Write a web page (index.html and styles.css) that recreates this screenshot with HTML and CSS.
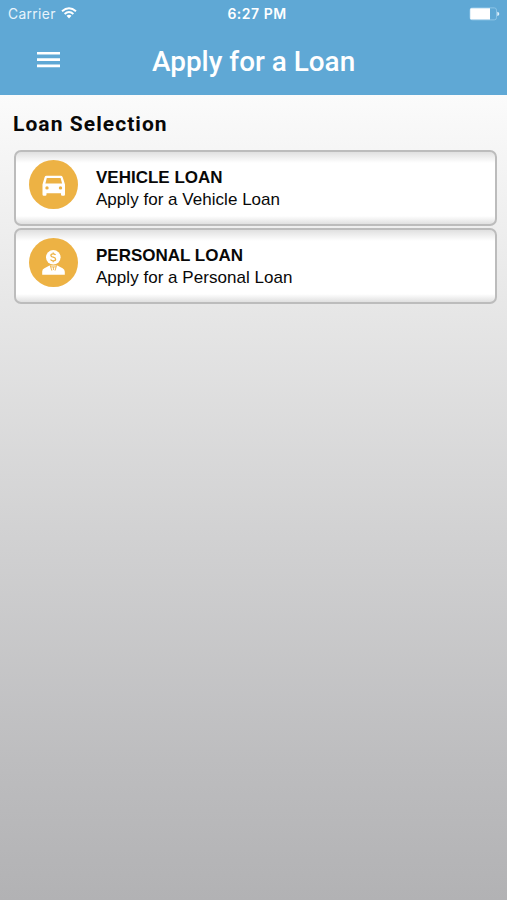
FILE: index.html
```html
<!DOCTYPE html>
<html lang="en">
<head>
<meta charset="utf-8">
<title>Apply for a Loan</title>
<link rel="stylesheet" href="styles.css">
</head>
<body>
<header class="header">
  <div class="status">
    <div class="carrier"><span>Carrier</span>
      <svg class="wifi" width="16" height="12" viewBox="0 0 16 12" fill="none" stroke="#fff" stroke-width="1.9"><path d="M1 4.2Q8-1.8 15 4.2M3.6 7Q8 3.2 12.4 7"/><path d="M5.5 8.8Q8 6.8 10.5 8.8L8 11.4Z" fill="#fff" stroke="none"/></svg>
    </div>
    <time class="time">6:27 PM</time>
    <svg class="battery" width="31" height="14" viewBox="0 0 31 14"><rect x="1" y=".9" width="26.5" height="12" rx="2.2" fill="none" stroke="#8cc4e6"/><path d="M2.5 1.3H21V12.5H2.5Q1.2 12.5 1.2 11.3V2.5Q1.2 1.3 2.5 1.3Z" fill="#fff"/><path d="M28.3 4.8Q30.3 5.4 30.3 6.9T28.3 9Z" fill="#e3f2fb"/></svg>
  </div>
  <div class="nav">
    <svg class="menu" width="23" height="16" viewBox="0 0 23 16" fill="#fff"><path d="M0 0H23V2.6H0ZM0 6.3H23V8.9H0ZM0 12.6H23V15.2H0Z"/></svg>
    <h1 class="title">Apply for a Loan</h1>
  </div>
</header>
<main class="content">
  <h2 class="heading">Loan Selection</h2>
  <section class="cards">
    <article class="card">
      <svg class="icon" width="49" height="49" viewBox="0 0 49 49"><circle cx="24.5" cy="24.5" r="24.5" fill="#edb244"/><path fill="#fff" fill-rule="evenodd" d="M17.5 15.8H31.7Q33.2 15.8 33.7 17.2L36 24.6V34.5Q36 35.7 34.8 35.7H33.2Q32 35.7 32 34.5V33.2H17.5V34.5Q17.5 35.7 16.3 35.7H14.7Q13.5 35.7 13.5 34.5V24.6L15.6 17.2Q16 15.8 17.5 15.8ZM17.8 18L16.4 23.6H33.1L31.6 18ZM18 26.2A1.7 1.7 0 1 0 18 29.6A1.7 1.7 0 1 0 18 26.2ZM31.5 26.2A1.7 1.7 0 1 0 31.5 29.6A1.7 1.7 0 1 0 31.5 26.2Z"/></svg>
      <div class="copy"><h3 class="name">VEHICLE LOAN</h3><p class="desc">Apply for a Vehicle Loan</p></div>
    </article>
    <article class="card">
      <svg class="icon" width="49" height="49" viewBox="0 0 49 49"><circle cx="24.5" cy="24.5" r="24.5" fill="#edb244"/><circle cx="24.3" cy="19.3" r="7.3" fill="#fff"/><path d="M26.5 17Q25.8 15.9 24.2 15.9Q21.9 15.9 21.9 17.5Q21.9 18.8 24.2 19.2Q26.6 19.7 26.6 21.2Q26.6 22.8 24.2 22.8Q22.2 22.8 21.6 21.4M24.2 14.5V16M24.2 22.7V24.2" fill="none" stroke="#edb244" stroke-width="1.3"/><path d="M13.2 36.8V33.6Q13.2 31.3 15.4 30.3L20.5 27.4H28.3L33.6 30.3Q35.8 31.5 35.8 33.7V36.8Z" fill="#fff"/><path d="M21.2 27.4L22.8 32.6M27.6 27.4L26 32.6M22 28.9H27M24.4 29V32" fill="none" stroke="#edb244" stroke-width=".9"/></svg>
      <div class="copy"><h3 class="name">PERSONAL LOAN</h3><p class="desc">Apply for a Personal Loan</p></div>
    </article>
  </section>
</main>
</body>
</html>
```
FILE: styles.css
```css
* { box-sizing: border-box; margin: 0; }
html { height: 100%; }
body {
  height: 900px;
  overflow: hidden;
  display: flex;
  flex-direction: column;
  font-family: "Liberation Sans", sans-serif;
  color: #080808;
}
svg { display: block; flex: none; }
.header { height: 95px; background: #5fa8d5; color: #fff; }
.status {
  height: 28px;
  padding: 0 7px 0 8px;
  display: grid;
  grid-template-columns: 1fr auto 1fr;
  align-items: center;
  font-family: Inter, sans-serif;
}
.carrier { display: flex; align-items: center; gap: 5px; font-size: 13.8px; letter-spacing: .35px; color: #e8f4fc; }
.wifi { margin-top: -2px; }
.time { margin-top: -2px; font-size: 14px; font-weight: 600; letter-spacing: .5px; padding-left: 6px; }
.battery { justify-self: end; }
.nav { height: 67px; padding-left: 37px; display: flex; align-items: center; }
.menu { margin-bottom: 3px; }
.title { margin-left: 92px; font: 500 27.9px/32px Roboto, sans-serif; white-space: nowrap; }
.content {
  flex: 1;
  padding: 16px 10px 0 14px;
  background: linear-gradient(#fbfbfb 0%, #e7e7e7 26%, #d1d1d2 55%, #bcbcbe 84%, #b2b2b4 100%);
}
.heading { margin-left: -1px; font: 700 21px/26px Roboto, sans-serif; letter-spacing: 1.06px; white-space: nowrap; }
.cards { margin-top: 13px; display: flex; flex-direction: column; gap: 2px; }
.card {
  height: 76px;
  padding: 8px 13px 0;
  display: flex;
  align-items: flex-start;
  border: 2px solid #bcbcbc;
  border-radius: 7px;
  background: linear-gradient(#e0e0e0 0, #fff 11px, #fff calc(100% - 8px), #e0e0e0 100%);
}
.copy { margin: 7px 0 0 18px; white-space: nowrap; }
.name { font-size: 17px; line-height: 22px; font-weight: 700; }
.desc { font-size: 17px; line-height: 22px; letter-spacing: .03px; }
```
